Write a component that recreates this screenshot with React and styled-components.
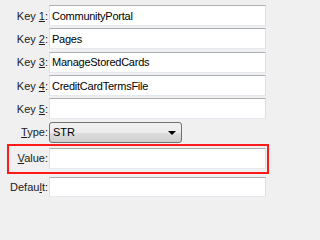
import React from "react";
import styled, { createGlobalStyle } from "styled-components";

const Global = createGlobalStyle`
  html, body { margin: 0; padding: 0; background: #f0f0f0; }
  body { width: 270px; height: 201px; overflow: hidden; font-family: "Liberation Sans", Arial, sans-serif; }
`;

const Form = styled.div`
  display: flex;
  flex-direction: column;
  padding-top: 5px;
  width: 270px;
  box-sizing: border-box;
`;

const Row = styled.div`
  display: grid;
  grid-template-columns: ${(p) => p.$labelW || 48}px 1fr;
  column-gap: 1px;
  align-items: center;
  padding-right: ${(p) => (p.$pr != null ? p.$pr : 4)}px;
  margin-bottom: ${(p) => (p.$mb != null ? p.$mb : 2.35)}px;
`;

const Label = styled.label`
  text-align: right;
  font-size: 11px;
  color: #1a1a1a;
  white-space: nowrap;
  u { text-decoration: underline; text-underline-offset: 1px; }
`;

const Input = styled.div`
  height: ${(p) => p.$h || 21}px;
  box-sizing: border-box;
  background: #fff;
  border: 1px solid #e3e9ef;
  border-top-color: #abadb3;
  border-left-color: #dbdfe6;
  border-right-color: #dbdfe6;
  padding: 0 2px;
  display: flex;
  align-items: center;
  font-size: 11px;
  letter-spacing: -0.25px;
  color: #000;
  white-space: nowrap;
  overflow: hidden;
`;

const Select = styled.div`
  width: 133px;
  height: 21px;
  box-sizing: border-box;
  border: 1px solid #707070;
  border-radius: 3px;
  background: linear-gradient(#f2f2f2 0%, #ebebeb 50%, #dddddd 51%, #cfcfcf 100%);
  display: flex;
  align-items: center;
  justify-content: space-between;
  padding: 0 5px 0 3px;
  font-size: 11px;
  color: #000;
`;

const Arrow = styled.span`
  width: 0;
  height: 0;
  border-left: 4px solid transparent;
  border-right: 4px solid transparent;
  border-top: 4px solid #000;
  margin-top: 1px;
`;

const Highlight = styled.div`
  margin: 1px 1px 3px 7px;
  border: 2px solid #ff1a1a;
  padding: 2px 0 3px 0;
`;

const Field = ({ label, value, h }) => (
  <Row>
    <Label>{label}</Label>
    <Input $h={h}>{value}</Input>
  </Row>
);

export default function App() {
  return (
    <>
      <Global />
      <Form>
        <Field label={<>Key <u>1</u>:</>} value="CommunityPortal" />
        <Field label={<>Key <u>2</u>:</>} value="Pages" />
        <Field label={<>Key <u>3</u>:</>} value="ManageStoredCards" />
        <Field label={<>Key <u>4</u>:</>} value="CreditCardTermsFile" />
        <Field label={<>Key <u>5</u>:</>} value="" />
        <Row $mb={0}>
          <Label><u>T</u>ype:</Label>
          <Select>
            <span>STR</span>
            <Arrow />
          </Select>
        </Row>
        <Highlight>
          <Row $labelW={39} $pr={1} $mb={0}>
            <Label><u>V</u>alue:</Label>
            <Input />
          </Row>
        </Highlight>
        <Field label={<>Defau<u>l</u>t:</>} value="" h={20} />
      </Form>
    </>
  );
}
